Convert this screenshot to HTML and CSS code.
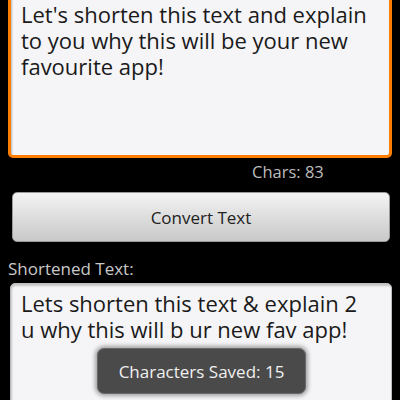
FILE: index.html
```html
<!DOCTYPE html>
<html>
<head>
<meta charset="utf-8">
<link rel="stylesheet" href="styles.css">
</head>
<body>
<div class="screen">
  <div class="input-box">Let's shorten this text and explain to you why this will be your new favourite app!</div>
  <div class="chars">Chars: 83</div>
  <button class="convert">Convert Text</button>
  <div class="label">Shortened Text:</div>
  <div class="output-box">Lets shorten this text &amp; explain 2 u why this will b ur new fav app!</div>
  <div class="toast">Characters Saved: 15</div>
</div>
</body>
</html>
```
FILE: styles.css
```css
html, body {
  margin: 0;
  padding: 0;
  background: #000;
  width: 400px;
  height: 400px;
  overflow: hidden;
}
.screen {
  position: relative;
  width: 400px;
  height: 400px;
  overflow: hidden;
  font-family: "Open Sans", "Noto Sans", sans-serif;
}
.input-box {
  margin: -12px 8px 0 8px;
  height: 170px;
  box-sizing: border-box;
  border: 3px solid #ff7d00;
  border-radius: 5px;
  background: #f5f4f7;
  box-shadow: inset 1px 2px 2px rgba(0,0,0,0.25);
  padding: 10px 20px 0 10px;
  font-size: 22px;
  line-height: 26px;
  color: #1a1a1a;
}
.chars {
  margin: 4px 0 0 0;
  padding-left: 252px;
  font-size: 16.5px;
  line-height: 20px;
  height: 20px;
  color: #bdbdbd;
}
.convert {
  display: block;
  margin: 10px 10px 0 12px;
  width: 378px;
  height: 50px;
  border: 1px solid #9a9a9a;
  border-radius: 5px;
  background: linear-gradient(#f4f4f4, #d9d9d9 60%, #c9c9c9);
  font-family: "Open Sans", "Noto Sans", sans-serif;
  font-size: 17px;
  color: #222;
  padding: 0;
}
.label {
  margin: 16px 0 0 8px;
  font-size: 17px;
  line-height: 22px;
  color: #c8c8c8;
}
.output-box {
  margin: 3px 8px 0 10px;
  height: 140px;
  box-sizing: border-box;
  border: 1px solid #bdbdbd;
  border-radius: 5px;
  background: #f5f5f7;
  box-shadow: inset 1px 2px 2px rgba(0,0,0,0.2);
  padding: 6px 20px 0 10px;
  font-size: 22px;
  line-height: 26px;
  color: #1a1a1a;
}
.toast {
  position: absolute;
  left: 97px;
  top: 348px;
  width: 209px;
  height: 46px;
  box-sizing: border-box;
  background: #4a4a4a;
  border: 1px solid #6a6a6a;
  border-radius: 7px;
  box-shadow: 0 0 4px 2px rgba(0,0,0,0.35);
  color: #f0f0f0;
  font-size: 17px;
  display: flex;
  align-items: center;
  justify-content: center;
}
```
